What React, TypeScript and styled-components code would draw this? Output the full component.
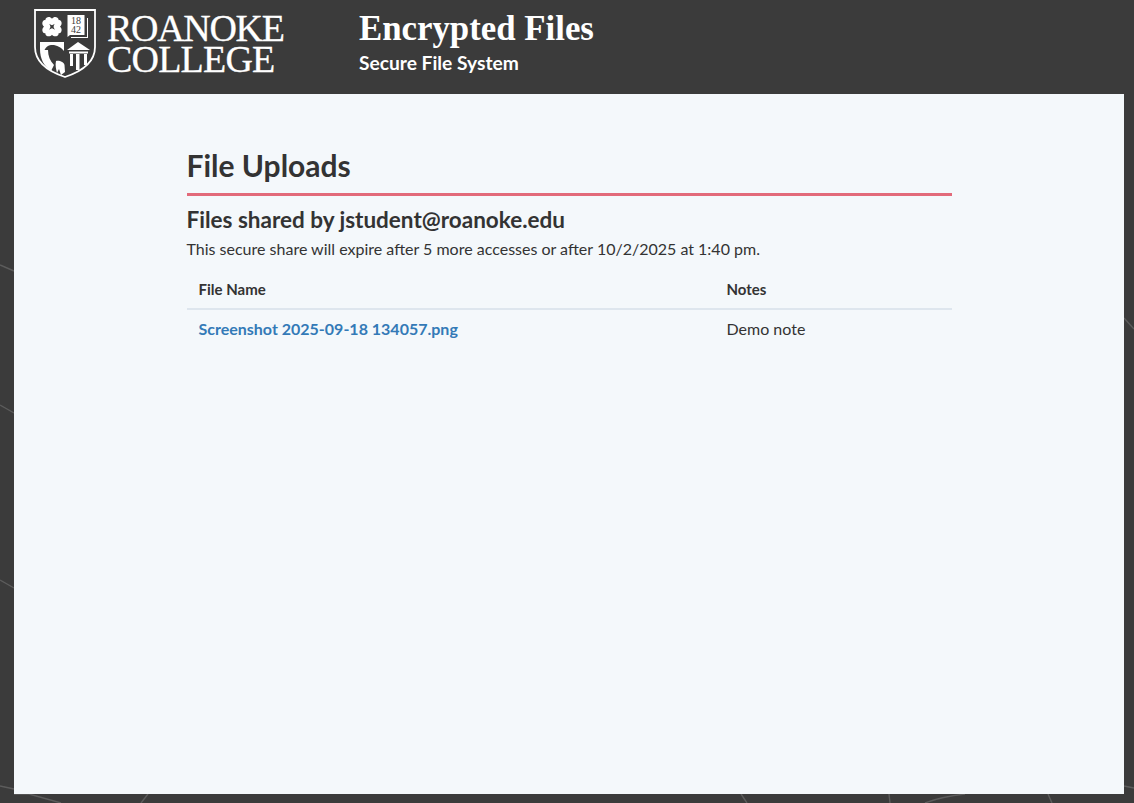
import React from "react";
import styled, { createGlobalStyle } from "styled-components";

const Global = createGlobalStyle`
  html, body { margin: 0; padding: 0; height: 100%; }
  body { background: #3b3b3b; font-family: Lato, "Liberation Sans", sans-serif; color: #333; overflow: hidden; }
`;

const Page = styled.div`
  position: relative;
  height: 803px;
  display: flex;
  flex-direction: column;
  overflow: hidden;
`;

const BackgroundLines = styled.svg`
  position: absolute;
  inset: 0;
  width: 1134px;
  height: 803px;
`;

const Header = styled.header`
  position: relative;
  height: 94px;
  flex: none;
  display: flex;
  align-items: flex-start;
  padding-left: 34px;
  color: #fff;
`;

const Logo = styled.div`
  display: flex;
  gap: 11px;
  width: 325px;
  padding-top: 9px;
`;

const Wordmark = styled.div`
  font-family: "Liberation Serif", serif;
  font-size: 38px;
  line-height: 31px;
  padding-top: 4px;
  -webkit-text-stroke: 0.3px #fff;
`;

const WordLine = styled.div<{ $spacing: number }>`
  letter-spacing: ${(p) => p.$spacing}px;
  white-space: nowrap;
`;

const Titles = styled.div`
  padding-top: 9px;
`;

const Title = styled.h1`
  margin: 0;
  font-family: "Liberation Serif", serif;
  font-weight: 700;
  font-size: 34.8px;
  line-height: 40px;
`;

const Subtitle = styled.div`
  font-weight: 700;
  font-size: 19.2px;
  line-height: 22px;
  margin-top: 3px;
`;

const Panel = styled.main`
  position: relative;
  flex: none;
  height: 700px;
  margin: 0 10px 0 14px;
  background: #f4f8fb;
  display: flex;
  justify-content: center;
`;

const Content = styled.div`
  width: 765px;
  padding-top: 51px;
`;

const Heading = styled.h2`
  margin: 0;
  font-size: 30px;
  font-weight: 700;
  line-height: 40px;
  padding-bottom: 8px;
  border-bottom: 3px solid #e26a7a;
`;

const SubHeading = styled.h3`
  margin: 10px 0 0;
  font-size: 22.5px;
  font-weight: 700;
  line-height: 28px;
`;

const Note = styled.p`
  margin: 4px 0 0;
  font-size: 16px;
  line-height: 22px;
`;

const Table = styled.table`
  width: 100%;
  margin-top: 10px;
  border-collapse: collapse;
  font-size: 16px;
  table-layout: fixed;
`;

const HeadCell = styled.th<{ $width?: number }>`
  text-align: left;
  font-weight: 700;
  font-size: 15px;
  padding: 0 12px;
  height: 38px;
  border-bottom: 2px solid #dee6ee;
  width: ${(p) => (p.$width ? `${p.$width}px` : "auto")};
`;

const Cell = styled.td`
  padding: 0 12px 2px;
  height: 37px;
`;

const FileLink = styled.a`
  color: #337ab7;
  font-weight: 700;
  text-decoration: none;
`;

const lines = [
  "M0 265 L14 271", "M0 405 L14 413", "M0 580 L14 588", "M0 786 L14 789",
  "M1124 318 L1134 329", "M1124 786 L1134 788",
  "M14 794 L29 794 L61 803", "M148 794 L141 803", "M741 794 L747 803",
  "M889 794 L890 803", "M965 794 Q940 797 925 803", "M1048 794 L1052 803",
];

const petal = "M0 -1.2 C-2.4 -3 -7 -3.6 -6.6 -7.2 C-6.2 -10 -1.8 -10.6 0 -8 C1.8 -10.6 6.2 -10 6.6 -7.2 C7 -3.6 2.4 -3 0 -1.2 Z";

const Shield = () => (
  <svg width="62" height="69" viewBox="0 0 62 69" fill="none">
    <path d="M1 1 H61 V38 C61 54 46 63 31 68 C16 63 1 54 1 38 Z" stroke="#fff" strokeWidth="1.8" />
    <g fill="#fff">
      <g transform="translate(18 17.7)">
        {[0, 90, 180, 270].map((a) => (
          <path key={a} d={petal} transform={`rotate(${a})`} />
        ))}
      </g>
      <path d="M33.5 6 H50.5 V26 H36 L33.5 28 Z" />
      <path d="M53 9 V28 H37 V29 H54 V9 Z" />
      <path d="M6 33 H30 V42 C27 38 22 35.5 17 36 C14 36.5 12 38 10.5 41 L14 41 C14 47 16 52 20 56 L17 62 C10 57 6 50 6 40 Z" />
      <path d="M22 52 C25 51 30 53 30.5 56 L31 63 L27 66 L25 60 L23 64 C22 60 21 56 22 52 Z" />
      <path d="M44 33 L56 41 H33 Z" />
      <path d="M35 42.5 H54 V44.5 H35 Z" />
      <rect x="36" y="45" width="3" height="12" />
      <rect x="42" y="45" width="3.5" height="16" />
      <rect x="50" y="45" width="3" height="11" />
    </g>
    <circle cx="18" cy="17.7" r="1.5" fill="#3b3b3b" />
    <text x="42" y="15" fontFamily="'Liberation Serif', serif" fontSize="10" fill="#3b3b3b" textAnchor="middle">18</text>
    <text x="42" y="24" fontFamily="'Liberation Serif', serif" fontSize="10" fill="#3b3b3b" textAnchor="middle">42</text>
  </svg>
);

export default function App() {
  return (
    <Page>
      <Global />
      <BackgroundLines viewBox="0 0 1134 803" fill="none">
        {lines.map((d) => (
          <path key={d} d={d} stroke="#5c5c5c" strokeWidth="1.4" />
        ))}
      </BackgroundLines>
      <Header>
        <Logo>
          <Shield />
          <Wordmark>
            <WordLine $spacing={-1.3}>ROANOKE</WordLine>
            <WordLine $spacing={-0.8}>COLLEGE</WordLine>
          </Wordmark>
        </Logo>
        <Titles>
          <Title>Encrypted Files</Title>
          <Subtitle>Secure File System</Subtitle>
        </Titles>
      </Header>
      <Panel>
        <Content>
          <Heading>File Uploads</Heading>
          <SubHeading>Files shared by jstudent@roanoke.edu</SubHeading>
          <Note>This secure share will expire after 5 more accesses or after 10/2/2025 at 1:40 pm.</Note>
          <Table>
            <thead>
              <tr>
                <HeadCell $width={504}>File Name</HeadCell>
                <HeadCell>Notes</HeadCell>
              </tr>
            </thead>
            <tbody>
              <tr>
                <Cell><FileLink href="#">Screenshot 2025-09-18 134057.png</FileLink></Cell>
                <Cell>Demo note</Cell>
              </tr>
            </tbody>
          </Table>
        </Content>
      </Panel>
    </Page>
  );
}
